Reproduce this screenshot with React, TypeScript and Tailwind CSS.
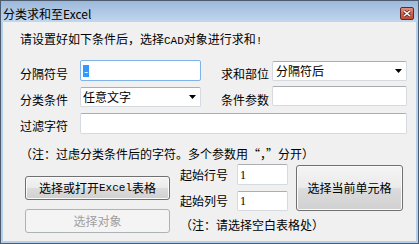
import React from 'react';

const field = "bg-white border border-[#d5d9e0] border-t-[#abadb3] rounded-[2px]";
const btn = "flex items-center justify-center border border-[#707070] rounded-[3px] bg-[linear-gradient(to_bottom,#f4f4f4_0%,#ebebeb_48%,#dcdcdc_52%,#d0d0d0_100%)] shadow-[inset_0_0_0_1px_#fbfbfb]";

function Arrow() {
  return (
    <svg width="7" height="4" viewBox="0 0 7 4" className="shrink-0">
      <polygon points="0,0 7,0 3.5,4" fill="#000" />
    </svg>
  );
}

function CloseButton() {
  return (
    <div className="w-[14px] h-[13px] rounded-[2px] border border-[#5e2a2a] bg-[linear-gradient(to_bottom,#e5907f_0%,#d0604a_50%,#c24a35_100%)] flex items-center justify-center">
      <svg width="8" height="7" viewBox="0 0 8 7">
        <path d="M1 1 L7 6 M7 1 L1 6" stroke="#5a2a2a" strokeWidth="3" />
        <path d="M1 1 L7 6 M7 1 L1 6" stroke="#fff" strokeWidth="1.6" />
      </svg>
    </div>
  );
}

export default function App() {
  return (
    <div className="w-[419px] h-[244px] flex flex-col border border-[#4c5b6e] bg-[#b4cfeb] font-['Noto_Sans_CJK_SC',sans-serif] text-[12px] leading-[14px] text-black">
      {/* Title bar */}
      <div className="h-[21px] shrink-0 flex items-center justify-between pl-[2px] pr-[4px] pt-[4px] bg-[linear-gradient(to_bottom,#9cb9db,#c1d6ee)]">
        <span>分类求和至Excel</span>
        <CloseButton />
      </div>

      {/* Client area */}
      <div className="flex-1 mx-[2px] mb-[2px] bg-[#f0f0f0] pl-[17px] pt-[10px] flex flex-col">
        <div>
          请设置好如下条件后，选择<span className="font-['Liberation_Mono',monospace] text-[11px]">CAD</span>对象进行求和<span className="font-['Liberation_Mono',monospace] text-[11px]">!</span>
        </div>

        {/* Row 1 */}
        <div className="flex mt-[12px] h-[21px]">
          <span className="w-[60px] mt-[7px]">分隔符号</span>
          <div className="w-[121px] h-[21px] bg-white border border-[#7eb4ea] rounded-[2px] flex items-center pl-[2px]">
            <span className="bg-[#3399ff] text-white px-[1px] leading-[12px]">-</span>
          </div>
          <span className="w-[51px] ml-[20px] mt-[7px]">求和部位</span>
          <div className={`${field} w-[135px] h-[20px] mt-[1px] flex items-center justify-between pl-[3px] pr-[4px]`}>
            <span>分隔符后</span>
            <Arrow />
          </div>
        </div>

        {/* Row 2 */}
        <div className="flex mt-[5px] h-[20px]">
          <span className="w-[60px] mt-[7px]">分类条件</span>
          <div className={`${field} w-[121px] h-[20px] mt-[1px] flex items-center justify-between pl-[2px] pr-[4px]`}>
            <span>任意文字</span>
            <Arrow />
          </div>
          <span className="w-[51px] ml-[20px] mt-[7px]">条件参数</span>
          <div className={`${field} w-[135px] h-[20px]`} />
        </div>

        {/* Row 3 */}
        <div className="flex mt-[7px] h-[21px]">
          <span className="w-[60px] mt-[6px]">过滤字符</span>
          <div className={`${field} w-[327px] h-[21px]`} />
        </div>

        <div className="mt-[13px]">（注：过虑分类条件后的字符。多个参数用“，”分开）</div>

        {/* Bottom section */}
        <div className="flex mt-[3px]">
          <div className="w-[145px] shrink-0 ml-[5px] mt-[12px] flex flex-col gap-[9px]">
            <div className={`${btn} h-[24px]`}>
              选择或打开<span className="font-['Liberation_Mono',monospace] text-[11px]">Excel</span>表格
            </div>
            <div className="h-[24px] flex items-center justify-center border border-[#adb2b5] rounded-[3px] bg-[#f4f4f4] text-[#a0a0a0]">
              选择对象
            </div>
          </div>

          <div className="w-[108px] shrink-0 ml-[10px] flex flex-col">
            <div className="flex h-[21px]">
              <span className="w-[57px] mt-[4px]">起始行号</span>
              <div className={`${field} w-[51px] h-[21px] pl-[2px] pt-[3px] font-['Liberation_Serif',serif] leading-[14px]`}>1</div>
            </div>
            <div className="flex h-[20px] mt-[6px]">
              <span className="w-[57px] mt-[3px]">起始列号</span>
              <div className={`${field} w-[51px] h-[20px] pl-[2px] pt-[2px] font-['Liberation_Serif',serif] leading-[14px]`}>1</div>
            </div>
            <div className="mt-[7px] whitespace-nowrap">（注：请选择空白表格处）</div>
          </div>

          <div className={`${btn} w-[107px] h-[46px] shrink-0 ml-[8px] mt-[1px]`}>选择当前单元格</div>
        </div>
      </div>
    </div>
  );
}
